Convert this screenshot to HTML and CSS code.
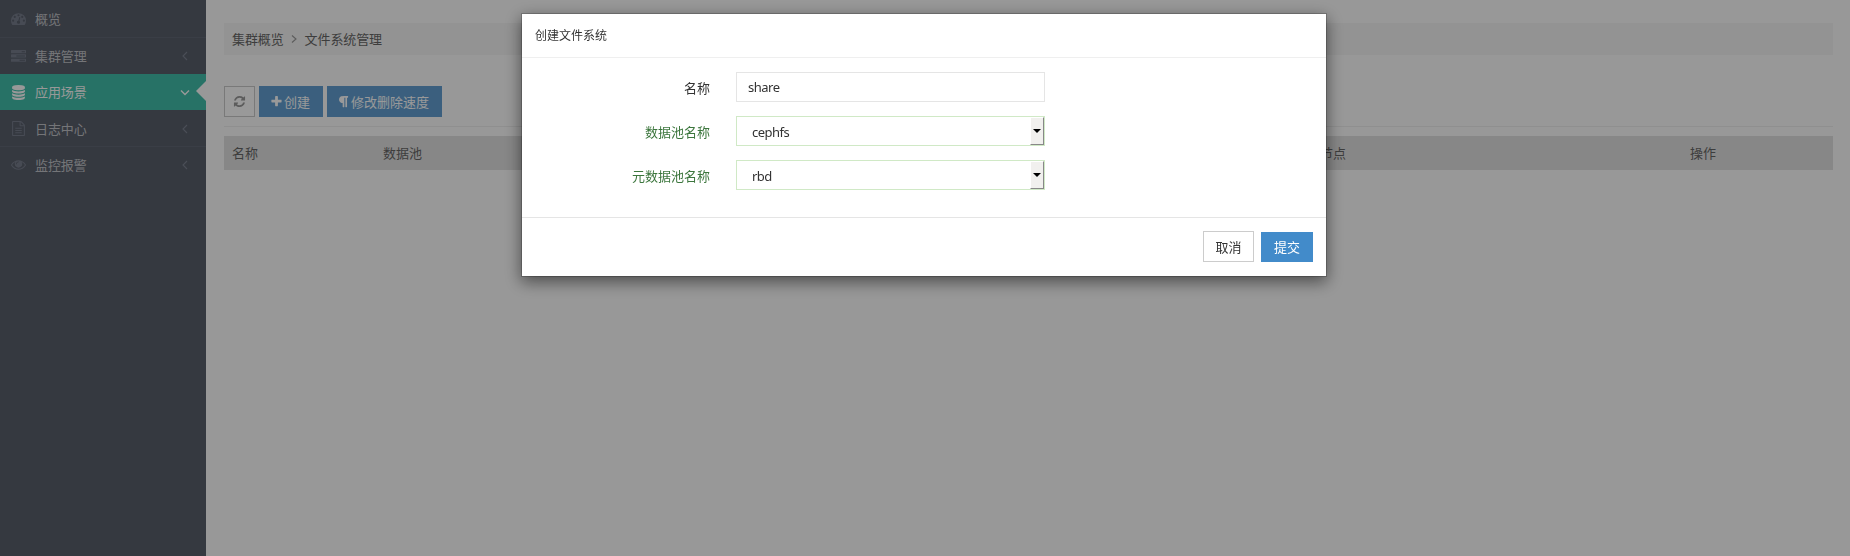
FILE: index.html
```html
<!DOCTYPE html>
<html lang="zh-CN">
<head>
<meta charset="utf-8">
<title>文件系统管理</title>
<link rel="stylesheet" href="styles.css">
</head>
<body>
<div class="app">
  <nav class="sidebar">
    <a class="item first"><svg class="icon" viewBox="0 0 1792 1792"><path fill-rule="evenodd" d="M0 1152a896 896 0 0 1 1792 0q0 261-141 483-19 29-54 29H195q-35 0-54-29Q0 1414 0 1152zM384 1152a128 128 0 1 0-256 0 128 128 0 1 0 256 0zM576 704a128 128 0 1 0-256 0 128 128 0 1 0 256 0zM1004 1185l101-382q6-26-7.500-48.500T1059 725t-48 6.500-30 39.500l-101 382q-60 5-107 43.500t-63 98.500q-20 77 20 146t117 89 146-20 89-117q16-60-6-117t-72-91zM1664 1152a128 128 0 1 0-256 0 128 128 0 1 0 256 0zM1024 512a128 128 0 1 0-256 0 128 128 0 1 0 256 0zM1472 704a128 128 0 1 0-256 0 128 128 0 1 0 256 0z"/></svg><span>概览</span></a>
    <a class="item"><svg class="icon" viewBox="0 0 1792 1792"><path fill-rule="evenodd" d="M64 128h1664q64 0 64 64v256q0 64-64 64H64q-64 0-64-64V192q0-64 64-64zM1280 256v128h384V256zM64 640h1664q64 0 64 64v256q0 64-64 64H64q-64 0-64-64V704q0-64 64-64zM640 768v128h1024V768zM64 1152h1664q64 0 64 64v256q0 64-64 64H64q-64 0-64-64v-256q0-64 64-64zM1024 1280v128h640v-128z"/></svg><span>集群管理</span><svg class="arrow" viewBox="0 0 10 10"><path d="M7 1L3 5l4 4"/></svg></a>
    <a class="item active"><svg class="icon" viewBox="0 0 1792 1792"><path d="M896 768q237 0 443-43t325-127v170q0 69-103 128t-280 93.500-385 34.500-385-34.500T231 896 128 768V598q119 84 325 127t443 43zM896 1536q237 0 443-43t325-127v170q0 69-103 128t-280 93.500-385 34.500-385-34.500-280-93.500-103-128v-170q119 84 325 127t443 43zM896 1152q237 0 443-43t325-127v170q0 69-103 128t-280 93.500-385 34.500-385-34.500-280-93.500-103-128V982q119 84 325 127t443 43zM896 0q208 0 385 34.500t280 93.500 103 128v128q0 69-103 128t-280 93.500T896 640t-385-34.500T231 512 128 384V256q0-69 103-128t280-93.500T896 0z"/></svg><span>应用场景</span><svg class="arrow" viewBox="0 0 10 10"><path d="M1 3.500l4 4 4-4"/></svg></a>
    <a class="item log"><svg class="icon" viewBox="0 0 1792 1792"><path fill-rule="evenodd" d="M1596 380q28 28 48 76t20 88v1152q0 40-28 68t-68 28H224q-40 0-68-28t-28-68V96q0-40 28-68t68-28h896q40 0 88 20t76 48zM1152 136v376h376q-10-29-22-41l-313-313q-12-12-41-22zM1536 1664V640h-416q-40 0-68-28t-28-68V128H256v1536zM512 800h768v128H512zM512 1072h768v128H512zM512 1344h768v128H512z"/></svg><span>日志中心</span><svg class="arrow" viewBox="0 0 10 10"><path d="M7 1L3 5l4 4"/></svg></a>
    <a class="item last"><svg class="icon" viewBox="0 0 1792 1792"><path fill-rule="evenodd" d="M1664 960q-152-236-381-353 61 104 61 225 0 185-131.500 316.500T896 1280t-316.500-131.500T448 832q0-121 61-225-229 117-381 353 133 205 333.500 326.500T896 1408t434.500-121.500T1664 960zM944 576q0-20-14-34t-34-14q-125 0-214.500 89.500T592 832q0 20 14 34t34 14 34-14 14-34q0-86 61-147t147-61q20 0 34-14t14-34zM1792 960q0 34-20 69-140 230-376.500 368.500T896 1536t-499.500-139T20 1029Q0 994 0 960t20-69q140-229 376.500-368T896 384t499.500 139T1772 891q20 35 20 69z"/></svg><span>监控报警</span><svg class="arrow" viewBox="0 0 10 10"><path d="M7 1L3 5l4 4"/></svg></a>
  </nav>
  <main class="main">
    <div class="crumbs"><span>集群概览</span><svg class="sep" viewBox="0 0 10 10"><path d="M3 1.500L7 5 3 8.500"/></svg><span>文件系统管理</span></div>
    <div class="toolbar">
      <button class="btn outline"><svg viewBox="0 0 1792 1792"><path d="M1639 1056q0 5-1 7-64 268-268 434.500T892 1664q-146 0-282.500-55T366 1452l-129 129q-19 19-45 19t-45-19-19-45v-448q0-26 19-45t45-19h448q26 0 45 19t19 45-19 45l-137 137q71 66 161 102t187 36q134 0 250-65t186-179q11-17 53-117 8-23 30-23h192q13 0 22.500 9.500t9.500 22.500zM1664 256v448q0 26-19 45t-45 19h-448q-26 0-45-19t-19-45 19-45l138-138q-148-137-349-137-134 0-250 65T460 628q-11 17-53 117-8 23-30 23H178q-13 0-22.500-9.500T146 736v-7q65-268 270-434.500T896 128q146 0 284 55.500T1425 340l130-129q19-19 45-19t45 19 19 45z"/></svg></button>
      <button class="btn primary"><svg class="plus" viewBox="0 0 1792 1792"><path d="M1600 736v192q0 40-28 68t-68 28h-416v416q0 40-28 68t-68 28H800q-40 0-68-28t-28-68v-416H288q-40 0-68-28t-28-68V736q0-40 28-68t68-28h416V224q0-40 28-68t68-28h192q40 0 68 28t28 68v416h416q40 0 68 28t28 68z"/></svg>创建</button>
      <button class="btn primary wide"><svg class="para" viewBox="0 0 1280 1792"><path d="M1278 197v73q0 29-18.500 61t-42.500 32q-50 0-54 1-26 6-32 31-3 11-3 64v1152q0 25-18 43t-43 18H959q-25 0-43-18t-18-43V393H755v1218q0 25-17.500 43t-43.500 18H586q-26 0-43.500-18t-17.500-43v-496q-147-12-245-59-126-58-192-179-64-117-64-259 0-166 88-286 88-118 209-159 111-37 417-37h479q25 0 43 18t18 43z"/></svg>修改删除速度</button>
    </div>
    <table class="grid">
      <tr><th class="c1">名称</th><th class="c2">数据池</th><th class="c3">元数据节点</th><th class="c4">操作</th></tr>
    </table>
  </main>
</div>
<div class="backdrop">
  <div class="dialog">
    <header class="head">创建文件系统</header>
    <div class="body">
      <div class="row"><label>名称</label><div class="field text">share</div></div>
      <div class="row ok"><label>数据池名称</label><div class="field">cephfs<span class="drop"><i></i></span></div></div>
      <div class="row ok"><label>元数据池名称</label><div class="field">rbd<span class="drop"><i></i></span></div></div>
    </div>
    <footer class="foot"><button class="cancel">取消</button><button class="submit">提交</button></footer>
  </div>
</div>
</body>
</html>
```
FILE: styles.css
```css
* { box-sizing: border-box; }
body {
  margin: 0;
  height: 556px;
  overflow: hidden;
  background: #fefefe;
  color: #676767;
  font: 13px/18px "Noto Sans", "Noto Sans CJK SC", sans-serif;
}
button { font: inherit; margin: 0; border: 0; }
.app { display: flex; height: 556px; }
.sidebar { width: 206px; flex: none; background: #595f6c; }
.item {
  display: flex;
  align-items: center;
  height: 36px;
  padding: 0 16px 0 11px;
  color: #c2c4c8;
  letter-spacing: -.1px;
  position: relative;
}
.item .icon { width: 15px; height: 15px; margin-right: 9px; fill: #777e8c; }
.item span { flex: 1; }
.item.first { height: 38px; border-bottom: 1px solid #626876; }
.item.log { height: 37px; padding-top: 1px; border-bottom: 1px solid #626876; }
.item.last { height: 35px; }
.arrow { width: 10px; height: 10px; fill: none; stroke: #7d8491; stroke-width: 1.1; }
.item.active { background: #41bfaa; color: #fefefe; }
.item.active .icon { fill: #fefefe; }
.active .arrow { stroke: #fefefe; stroke-width: 1.4; }
.item.active::after {
  content: "";
  position: absolute;
  right: 0;
  top: 7px;
  border: 10px solid transparent;
  border-left: 0;
  border-right-color: #fefefe;
}
.main { flex: 1; padding: 23px 17px 0 18px; }
.crumbs {
  display: flex;
  align-items: center;
  height: 32px;
  padding: 0 8px;
  background: #f5f5f5;
  letter-spacing: -.1px;
}
.sep { width: 10px; height: 10px; margin: 0 6px 0 5px; fill: none; stroke: #999; stroke-width: 1.1; }
.toolbar {
  display: flex;
  gap: 4px;
  margin-top: 31px;
  height: 41px;
  border-bottom: 1px solid #eee;
}
.btn { height: 31px; display: flex; align-items: center; padding: 0 12px; }
.btn svg { width: 13px; height: 13px; fill: currentColor; }
.outline { width: 31px; padding: 0 8px; border: 1px solid #cacaca; background: #fff; color: #999; }
.primary { background: #639fd3; color: #fff; width: 64px; padding: 0 9px 0 11px; }
.primary svg { margin-right: 1px; }
.wide { width: 115px; }
.wide .para { width: 11px; height: 13px; margin-right: 2px; }
.grid { width: 100%; margin-top: 9px; border-collapse: collapse; table-layout: fixed; background: #e1e1e1; }
.grid th { height: 34px; padding: 0 8px; text-align: left; font-weight: 400; }
.grid .c1 { width: 151px; }
.grid .c2 { width: 898px; }
.grid .c3 { width: 409px; }

.backdrop {
  position: fixed;
  inset: 0;
  padding: 13px 0 0 521px;
  background: rgba(0, 0, 0, .4);
}
.dialog {
  width: 806px;
  height: 264px;
  border: 1px solid rgba(0, 0, 0, .2);
  background: #fff;
  background-clip: padding-box;
  box-shadow: 0 5px 15px rgba(0, 0, 0, .5);
  color: #333;
}
.head {
  height: 44px;
  padding: 13px 13px 0;
  font-size: 12px;
  border-bottom: 1px solid #efefef;
}
.body { display: flex; flex-direction: column; gap: 14px; padding-top: 14px; height: 159px; }
.row { display: flex; height: 30px; gap: 26px; }
.row label { width: 188px; text-align: right; padding-top: 7px; }
.field {
  width: 309px;
  height: 30px;
  padding: 6px 0 0 15px;
  border: 1px solid #e5e5e5;
  letter-spacing: -.5px;
  position: relative;
}
.field.text { padding: 5px 0 0 11px; }
.ok label { color: #3c763d; }
.ok .field { border-color: #d0e9c6; }
.drop {
  position: absolute;
  right: 0;
  top: 0;
  width: 14px;
  height: 28px;
  display: flex;
  align-items: center;
  justify-content: center;
  background: #f1f0ee;
  border: 1px solid #fff;
  border-right-color: #888;
  border-bottom-color: #888;
}
.drop i { border: 4px solid transparent; border-top-color: #000; border-bottom: 0; }
.foot {
  display: flex;
  justify-content: flex-end;
  gap: 7px;
  height: 59px;
  padding: 13px 13px 0 0;
  border-top: 1px solid #e5e5e5;
}
.cancel { width: 51px; height: 31px; border: 1px solid #ccc; background: #fff; color: #333; }
.submit { width: 52px; height: 30px; margin-top: 1px; background: #428bca; color: #fff; }
```
